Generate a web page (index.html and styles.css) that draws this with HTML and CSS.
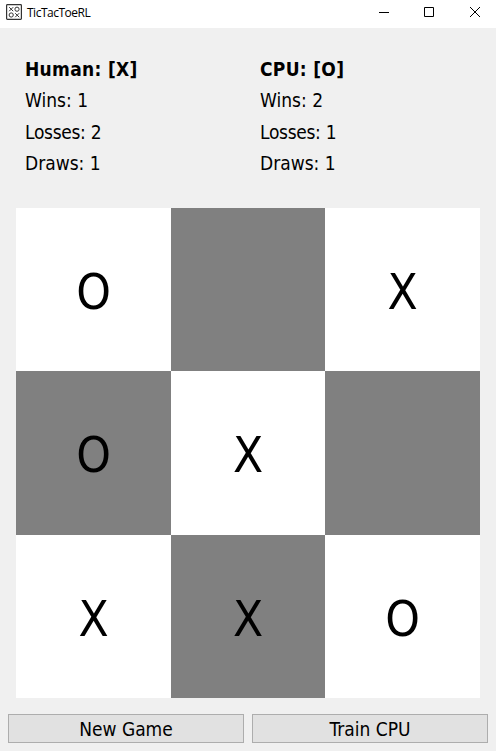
FILE: index.html
```html
<!DOCTYPE html>
<html lang="en">
<head>
<meta charset="utf-8">
<title>TicTacToeRL</title>
<link rel="stylesheet" href="styles.css">
</head>
<body>
<header class="titlebar">
  <svg class="app-icon" width="16" height="16" viewBox="0 0 16 16" fill="none" stroke="#333">
    <rect x=".6" y=".6" width="14.8" height="14.8" rx=".8" stroke-width="1.2"/>
    <path d="M3.2 3.2l4 4m0-4l-4 4M9.2 9.2l4 4m0-4l-4 4"/>
    <circle cx="11" cy="5.2" r="2.1"/><circle cx="5.2" cy="11" r="2.1"/>
  </svg>
  <h1 class="title">TicTacToeRL</h1>
  <div class="controls">
    <svg width="46" height="28" viewBox="0 0 46 28"><path d="M18 12.5h10" stroke="#000"/></svg>
    <svg width="46" height="28" viewBox="0 0 46 28"><path d="M17.5 7.5h9v9h-9z" fill="none" stroke="#000"/></svg>
    <svg width="46" height="28" viewBox="0 0 46 28"><path d="M17 7l10 10M27 7L17 17" stroke="#000"/></svg>
  </div>
</header>
<main>
  <section class="scores">
    <div class="score">
      <h2>Human: [X]</h2>
      <p class="wins">Wins: 1</p>
      <p class="losses">Losses: 2</p>
      <p class="draws">Draws: 1</p>
    </div>
    <div class="score">
      <h2>CPU: [O]</h2>
      <p class="wins">Wins: 2</p>
      <p class="losses">Losses: 1</p>
      <p class="draws">Draws: 1</p>
    </div>
  </section>
  <section class="board">
    <div class="cell">O</div><div class="cell"></div><div class="cell">X</div>
    <div class="cell">O</div><div class="cell">X</div><div class="cell"></div>
    <div class="cell">X</div><div class="cell">X</div><div class="cell">O</div>
  </section>
  <footer class="actions">
    <button type="button">New Game</button>
    <button type="button">Train CPU</button>
  </footer>
</main>
</body>
</html>
```
FILE: styles.css
```css
* { box-sizing: border-box; }
body {
  margin: 0;
  height: 751px;
  overflow: hidden;
  background: #f0f0f0;
  color: #000;
  font-family: Tahoma, "DejaVu Sans Condensed", "DejaVu Sans", sans-serif;
  font-stretch: condensed;
}
.titlebar {
  display: flex;
  height: 28px;
  padding-left: 6px;
  background: #fff;
}
.app-icon { margin-top: 4px; }
.title {
  margin: 0 0 0 5px;
  font: 12px/26px "Segoe UI", "Open Sans", sans-serif;
  letter-spacing: -0.5px;
}
.controls { display: flex; margin-left: auto; margin-right: -3px; }
.scores {
  display: grid;
  grid-template-columns: 235px 1fr;
  height: 180px;
  padding: 26px 0 0 25px;
}
.score h2, .score p {
  margin: 0;
  height: 31.33px;
  font-size: 19px;
  line-height: 31.33px;
  white-space: nowrap;
}
.score h2 { letter-spacing: 0.3px; }
.score .losses { letter-spacing: -0.3px; }
.board {
  display: grid;
  grid-template-columns: 155px 154px 155px;
  grid-template-rows: 163px 164px 163px;
  margin: 0 16px;
}
.cell {
  display: flex;
  align-items: center;
  justify-content: center;
  padding-top: 5px;
  background: #fff;
  font-size: 49px;
}
.cell:nth-child(even) { background: #808080; }
.actions {
  display: flex;
  gap: 8px;
  padding: 16px 8px 8px;
}
.actions button {
  flex: 1;
  height: 29px;
  padding: 0;
  border: 1px solid #adadad;
  background: #e1e1e1;
  color: #000;
  font-family: inherit;
  font-stretch: condensed;
  font-size: 19px;
}
```
